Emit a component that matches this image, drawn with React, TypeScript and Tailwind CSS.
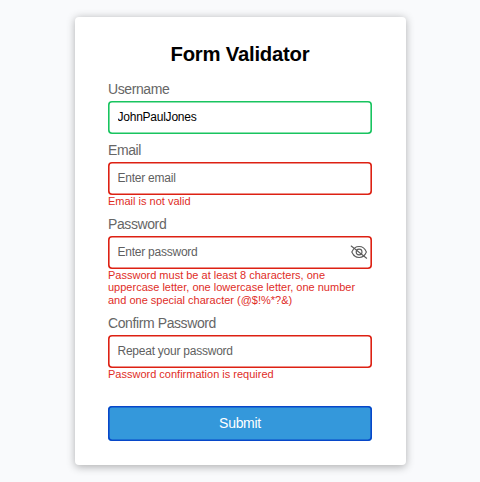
import { useState } from "react";
import type { ReactNode } from "react";

const inputClass =
  "block h-[33px] w-full rounded-[4px] bg-white px-[9.5px] pb-px text-[12px] tracking-[-0.24px] text-black outline-none placeholder:text-[#5f5f5f]";
const validBorder = "shadow-[inset_0_0_0_1.6px_#18c45f]";
const errorBorder = "shadow-[inset_0_0_0_1.6px_#dd2113]";

function EyeOffIcon() {
  return (
    <svg width="18" height="16" viewBox="0 0 18 16" fill="none" stroke="#5c5c5c" strokeWidth="1.1" strokeLinecap="round">
      <path d="M1.8 8C3.3 4.3 6 2.5 9.1 2.5S14.9 4.3 16.4 8C14.9 11.7 12.2 13.5 9.1 13.5S3.3 11.7 1.8 8Z" />
      <circle cx="9.1" cy="8" r="2.9" />
      <path d="M1.2 2L16.6 14.2" />
    </svg>
  );
}

function Field({ label, error, height, children }: { label: string; error?: string; height: string; children: ReactNode }) {
  return (
    <div className={height}>
      <label className="block h-[19px] text-[14px] leading-[15px] tracking-[-0.4px] text-[#666]">{label}</label>
      {children}
      {error && <p className="text-[11px] leading-[12.6px] text-[#e02d1f]">{error}</p>}
    </div>
  );
}

export default function App() {
  const [visible, setVisible] = useState(false);
  return (
    <main className="flex h-[482px] w-[480px] justify-center overflow-hidden bg-[#f9fafc] pt-[17px] font-['Liberation_Sans',Arial,sans-serif]">
      <form
        noValidate
        onSubmit={(e) => e.preventDefault()}
        className="h-[448px] w-[331px] rounded-[4px] bg-white px-[33.5px] shadow-[0_1.5px_8px_rgba(0,0,0,0.3)]"
      >
        <h1 className="pt-[25px] text-center text-[20.3px] leading-6 font-bold tracking-[-0.22px] text-black">Form Validator</h1>
        <div className="mt-4">
          <Field label="Username" height="h-[61px]">
            <input className={`${inputClass} ${validBorder}`} defaultValue="JohnPaulJones" />
          </Field>
          <Field label="Email" error="Email is not valid" height="h-[73.5px]">
            <input className={`${inputClass} ${errorBorder}`} placeholder="Enter email" />
          </Field>
          <Field
            label="Password"
            error="Password must be at least 8 characters, one uppercase letter, one lowercase letter, one number and one special character (@$!%*?&)"
            height="h-[99.5px]"
          >
            <div className="relative">
              <input
                type={visible ? "text" : "password"}
                className={`${inputClass} ${errorBorder}`}
                placeholder="Enter password"
              />
              <button
                type="button"
                aria-label="Toggle password visibility"
                onClick={() => setVisible(!visible)}
                className="absolute top-[8px] right-[4px]"
              >
                <EyeOffIcon />
              </button>
            </div>
          </Field>
          <Field label="Confirm Password" error="Password confirmation is required" height="h-[89.5px]">
            <input type="password" className={`${inputClass} ${errorBorder}`} placeholder="Repeat your password" />
          </Field>
        </div>
        <button
          type="submit"
          className="block h-[35px] w-full rounded-[4px] bg-[#3498db] text-[14px] tracking-[-0.3px] text-white shadow-[inset_0_0_0_1.6px_#0747c9]"
        >
          Submit
        </button>
      </form>
    </main>
  );
}
